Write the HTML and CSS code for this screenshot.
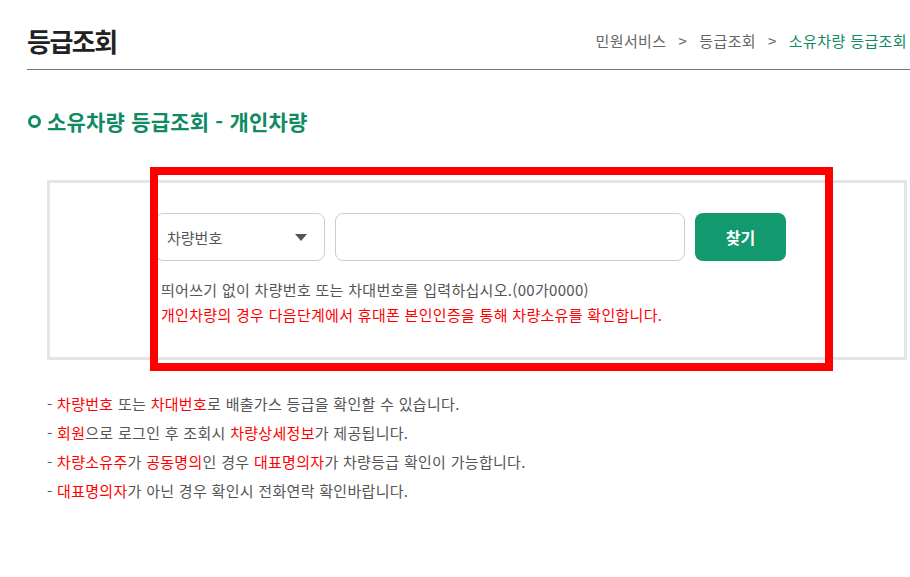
FILE: index.html
```html
<!DOCTYPE html>
<html lang="ko">

<head>
  <meta charset="UTF-8">
  <meta name="viewport" content="width=device-width, initial-scale=1.0">
  <link rel="stylesheet" href="styles.css">
</head>

<body>
  <div class="page">
    <header class="page-head">
      <h1>등급조회</h1>
      <p class="breadcrumb">
        <span>민원서비스</span><span class="sep">&gt;</span><span>등급조회</span><span class="sep">&gt;</span><span class="current">소유차량 등급조회</span>
      </p>
    </header>

    <h2 class="section-title"><span class="dot"></span>소유차량 등급조회 - 개인차량</h2>

    <!-- Search box -->
    <div class="search-box">
      <div class="search-form">
        <div class="search-row">
          <div class="select">
            <span>차량번호</span>
            <span class="arrow"></span>
          </div>
          <input class="car-input" type="text">
          <button class="btn-find" type="button">찾기</button>
        </div>
        <p class="help">띄어쓰기 없이 차량번호 또는 차대번호를 입력하십시오.(00가0000)</p>
        <p class="help red">개인차량의 경우 다음단계에서 휴대폰 본인인증을 통해 차량소유를 확인합니다.</p>
      </div>
      <div class="highlight"></div>
    </div>

    <ul class="notes">
      <li>- <em>차량번호</em> 또는 <em>차대번호</em>로 배출가스 등급을 확인할 수 있습니다.</li>
      <li>- <em>회원</em>으로 로그인 후 조회시 <em>차량상세정보</em>가 제공됩니다.</li>
      <li>- <em>차량소유주</em>가 <em>공동명의</em>인 경우 <em>대표명의자</em>가 차량등급 확인이 가능합니다.</li>
      <li>- <em>대표명의자</em>가 아닌 경우 확인시 전화연락 확인바랍니다.</li>
    </ul>
  </div>
</body>

</html>
```

FILE: styles.css
```css
body, html {
  margin: 0;
  padding: 0;
  overflow: hidden;
  background: #ffffff;
  font-family: "Noto Sans CJK KR", "Noto Sans", sans-serif;
  color: #555555;
}

.page {
  width: 900px;
  padding-left: 27px;
}

.page-head {
  display: flex;
  justify-content: space-between;
  align-items: center;
  height: 70px;
  padding-top: 12px;
  box-sizing: border-box;
  border-bottom: 1px solid #777777;
}

.page-head h1 {
  margin: 0;
  font-size: 26px;
  font-weight: bold;
  letter-spacing: -1.5px;
  color: #222222;
}

.breadcrumb {
  margin: 0;
  padding-right: 20px;
  font-size: 15px;
  letter-spacing: 0.4px;
  color: #666666;
}

.breadcrumb .sep {
  margin: 0 12px;
}

.breadcrumb .current {
  color: #0f8a63;
}

.section-title {
  display: flex;
  align-items: center;
  margin: 36px 0 0;
  font-size: 21px;
  font-weight: bold;
  letter-spacing: 0.2px;
  color: #0f8a63;
}

.section-title .dot {
  width: 7px;
  height: 7px;
  border: 3px solid #0f8a63;
  border-radius: 50%;
  margin: 0 6px 0 1px;
}

.search-box {
  position: relative;
  margin: 44px 20px 0;
  height: 180px;
  border: 3px solid #e5e5e5;
  box-sizing: border-box;
}

.search-form {
  padding: 30px 0 0 105px;
}

.search-row {
  display: flex;
  gap: 10px;
}

.select {
  display: flex;
  justify-content: space-between;
  align-items: center;
  width: 170px;
  height: 48px;
  padding: 0 17px 0 11px;
  box-sizing: border-box;
  border: 1px solid #cccccc;
  border-radius: 8px;
  font-size: 15px;
  color: #555555;
}

.select .arrow {
  width: 0;
  height: 0;
  border-left: 6px solid transparent;
  border-right: 6px solid transparent;
  border-top: 7px solid #555555;
}

.car-input {
  width: 350px;
  height: 48px;
  box-sizing: border-box;
  border: 1px solid #cccccc;
  border-radius: 8px;
  outline: none;
}

.btn-find {
  width: 91px;
  height: 48px;
  border: none;
  border-radius: 8px;
  background: #129a6e;
  color: #ffffff;
  font-family: inherit;
  font-size: 16px;
  font-weight: bold;
}

.help {
  margin: 0 0 0 6px;
  font-size: 15px;
  line-height: 25px;
  letter-spacing: 0.3px;
  color: #555555;
}

.search-row + .help {
  margin-top: 16px;
}

.help.red {
  color: #ff0000;
}

/* annotation frame */
.highlight {
  position: absolute;
  left: 100px;
  top: -16px;
  width: 683px;
  height: 204px;
  border: 8px solid #ff0000;
  box-sizing: border-box;
}

.notes {
  list-style: none;
  margin: 29px 0 0 20px;
  padding: 0;
  font-size: 15px;
  line-height: 29px;
  letter-spacing: 0.3px;
  color: #555555;
}

.notes em {
  font-style: normal;
  color: #ff0000;
}
```
